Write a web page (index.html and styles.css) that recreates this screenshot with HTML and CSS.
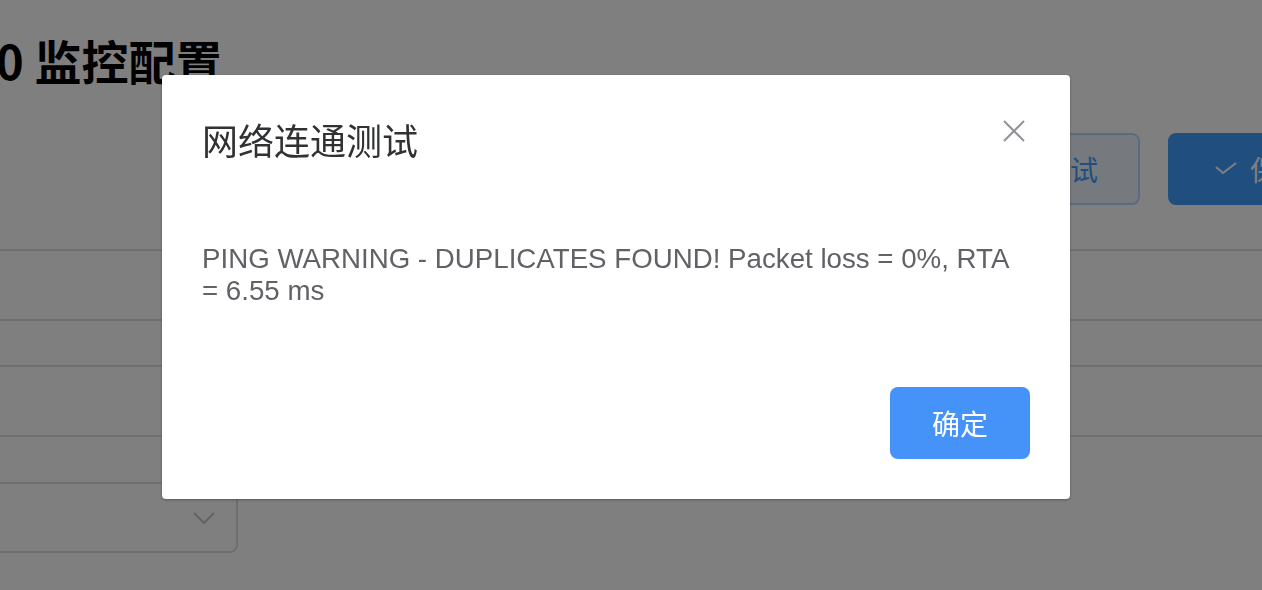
FILE: index.html
```html
<!DOCTYPE html>
<html lang="zh-CN">
<head>
    <meta charset="UTF-8">
    <meta name="viewport" content="width=device-width, initial-scale=1.0">
    <title>监控配置</title>
    <link rel="stylesheet" href="styles.css">
</head>
<body>
    <!-- Page behind the dialog -->
    <div class="page">
        <h1 class="page-title">0 监控配置</h1>

        <div class="toolbar">
            <button class="btn btn-plain">连通测试</button>
            <button class="btn btn-primary">
                <svg class="btn-icon" viewBox="0 0 28 28"><polyline points="4,12 11,18 24,8" /></svg>
                保存
            </button>
        </div>

        <div class="form">
            <div class="field"></div>
            <div class="field"></div>
            <div class="select">
                <svg class="select-arrow" viewBox="0 0 22 12"><polyline points="1,1 11,11 21,1" /></svg>
            </div>
        </div>
    </div>

    <!-- Dialog -->
    <div class="overlay">
        <div class="dialog">
            <div class="dialog-header">
                <span class="dialog-title">网络连通测试</span>
                <button class="dialog-close" aria-label="关闭">
                    <svg viewBox="0 0 32 32"><line x1="6" y1="6" x2="26" y2="26" /><line x1="26" y1="6" x2="6" y2="26" /></svg>
                </button>
            </div>
            <div class="dialog-body">PING WARNING - DUPLICATES FOUND! Packet loss = 0%, RTA = 6.55 ms</div>
            <div class="dialog-footer">
                <button class="btn btn-confirm">确定</button>
            </div>
        </div>
    </div>
</body>
</html>
```

FILE: styles.css
```css
body {
    margin: 0;
    padding: 0;
    background-color: #fff;
    font-family: "Liberation Sans", "Noto Sans CJK SC", sans-serif;
    overflow: hidden;
}

/* Page */
.page {
    padding-top: 30px;
}

.page-title {
    margin: 0 0 0 -4px;
    font-family: "Noto Sans CJK SC", sans-serif;
    font-size: 47px;
    line-height: 60px;
    font-weight: bold;
    color: #000;
}

.toolbar {
    display: flex;
    justify-content: flex-end;
    gap: 28px;
    margin-top: 43px;
    margin-right: -88px;
}

.btn {
    height: 72px;
    padding: 0 40px;
    border-radius: 8px;
    font-family: "Noto Sans CJK SC", sans-serif;
    font-size: 28px;
    cursor: pointer;
}

.btn-plain {
    background-color: #ecf5ff;
    border: 2px solid #b3d8ff;
    color: #409eff;
}

.btn-primary {
    display: flex;
    align-items: center;
    padding: 0 42px;
    background-color: #409eff;
    border: 2px solid #409eff;
    color: #fff;
}

.btn-icon {
    width: 28px;
    height: 28px;
    margin-right: 10px;
    fill: none;
    stroke: #fff;
    stroke-width: 2;
}

/* Form rows */
.form {
    display: flex;
    flex-direction: column;
    gap: 44px;
    margin-top: 44px;
}

.field {
    height: 68px;
    margin: 0 -10px;
    border: 2px solid #dcdfe6;
    border-radius: 8px;
}

.select {
    display: flex;
    align-items: center;
    justify-content: flex-end;
    width: 223px;
    height: 67px;
    margin-left: -10px;
    margin-top: 1px;
    padding-right: 21px;
    border: 2px solid #dcdfe6;
    border-radius: 8px;
}

.select-arrow {
    width: 22px;
    height: 12px;
    fill: none;
    stroke: #c0c4cc;
    stroke-width: 2;
}

/* Dialog */
.overlay {
    position: fixed;
    top: 0;
    left: 0;
    right: 0;
    bottom: 0;
    background-color: rgba(0, 0, 0, 0.5);
    display: flex;
    align-items: flex-start;
}

.dialog {
    width: 908px;
    margin: 75px 0 0 162px;
    background-color: #fff;
    border-radius: 4px;
    box-shadow: 0 1px 3px rgba(0, 0, 0, 0.3);
}

.dialog-header {
    display: flex;
    justify-content: space-between;
    align-items: flex-start;
    padding: 40px 40px 20px;
}

.dialog-title {
    font-family: "Noto Sans CJK SC", sans-serif;
    font-size: 36px;
    line-height: 48px;
    color: #303133;
}

.dialog-close {
    width: 32px;
    height: 32px;
    padding: 0;
    border: none;
    background: none;
    cursor: pointer;
}

.dialog-close svg {
    display: block;
    width: 32px;
    height: 32px;
    stroke: #909399;
    stroke-width: 2;
}

.dialog-body {
    padding: 60px 40px;
    font-size: 27.7px;
    line-height: 32px;
    color: #606266;
}

.dialog-footer {
    display: flex;
    justify-content: flex-end;
    padding: 20px 40px 40px;
}

.btn-confirm {
    width: 140px;
    padding: 0;
    background-color: #4592f8;
    border: none;
    color: #fff;
}
```
